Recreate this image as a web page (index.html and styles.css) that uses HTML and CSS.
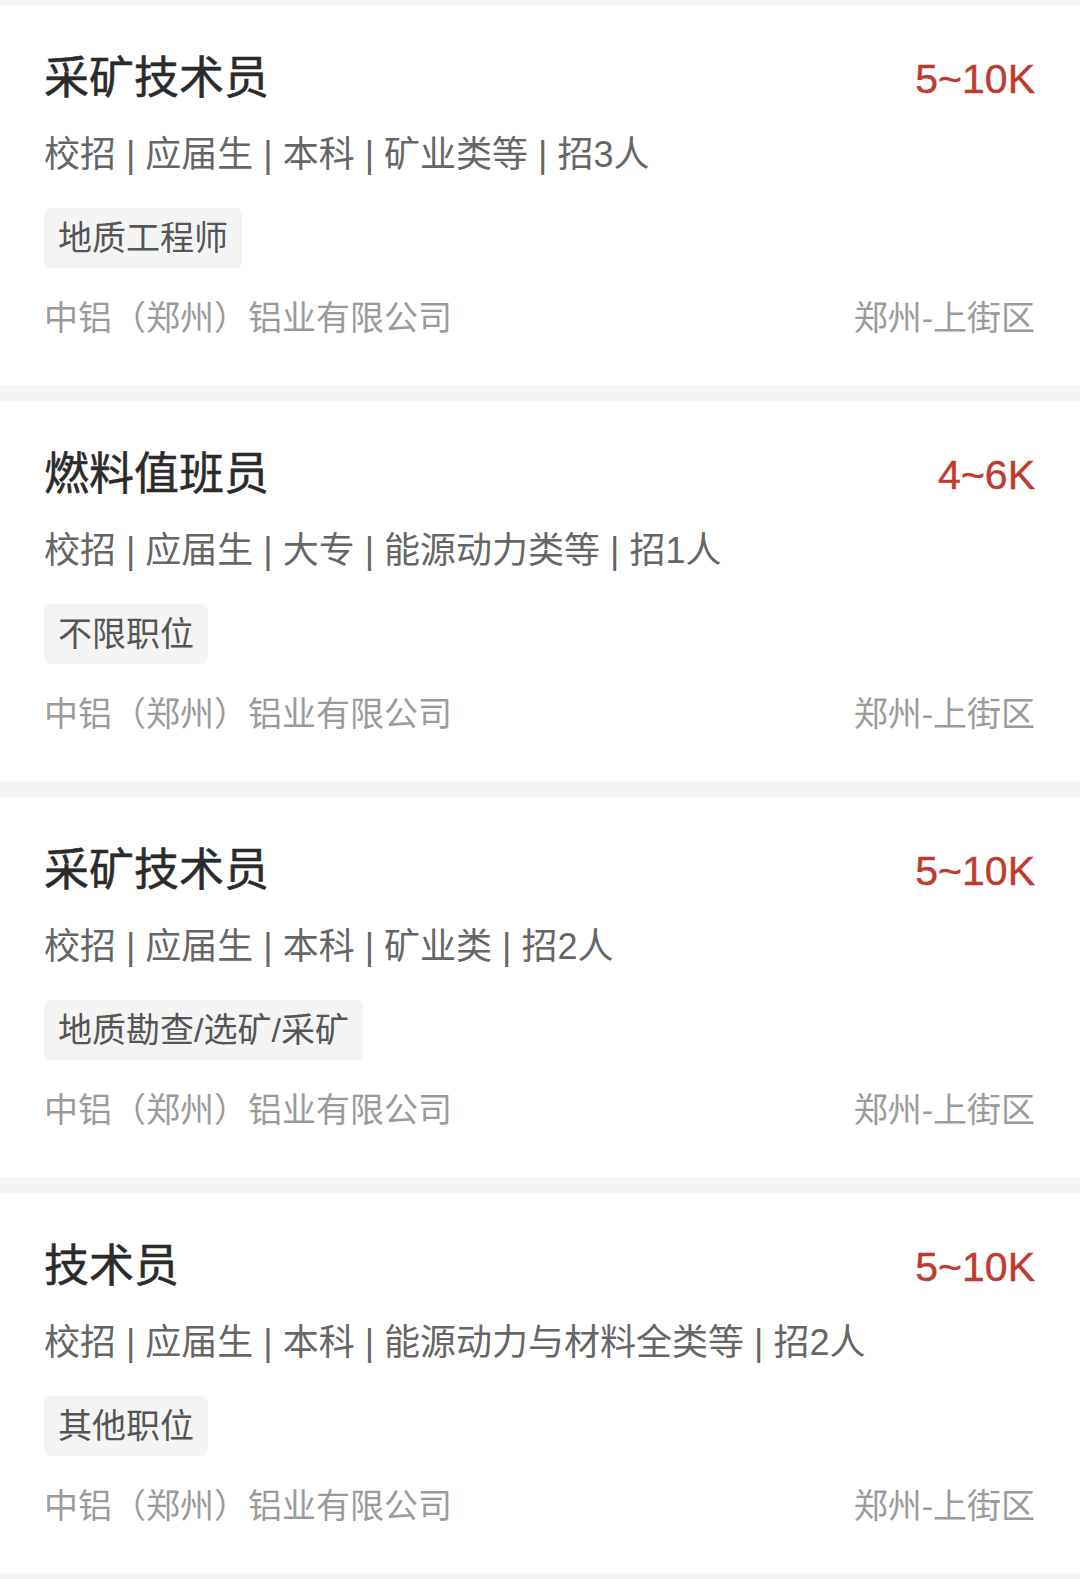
FILE: index.html
```html
<!DOCTYPE html>
<html lang="zh-CN">
<head>
    <meta charset="UTF-8">
    <meta name="viewport" content="width=device-width, initial-scale=1.0">
    <title>职位列表</title>
    <link rel="stylesheet" href="styles.css">
</head>
<body>
    <div class="job-list">
        <div class="job-card">
            <div class="job-head">
                <h3 class="job-title">采矿技术员</h3>
                <span class="job-salary">5~10K</span>
            </div>
            <p class="job-meta">校招 | 应届生 | 本科 | 矿业类等 | 招3人</p>
            <span class="job-tag">地质工程师</span>
            <div class="job-foot">
                <span>中铝（郑州）铝业有限公司</span>
                <span>郑州-上街区</span>
            </div>
        </div>

        <div class="job-card">
            <div class="job-head">
                <h3 class="job-title">燃料值班员</h3>
                <span class="job-salary">4~6K</span>
            </div>
            <p class="job-meta">校招 | 应届生 | 大专 | 能源动力类等 | 招1人</p>
            <span class="job-tag">不限职位</span>
            <div class="job-foot">
                <span>中铝（郑州）铝业有限公司</span>
                <span>郑州-上街区</span>
            </div>
        </div>

        <div class="job-card">
            <div class="job-head">
                <h3 class="job-title">采矿技术员</h3>
                <span class="job-salary">5~10K</span>
            </div>
            <p class="job-meta">校招 | 应届生 | 本科 | 矿业类 | 招2人</p>
            <span class="job-tag">地质勘查/选矿/采矿</span>
            <div class="job-foot">
                <span>中铝（郑州）铝业有限公司</span>
                <span>郑州-上街区</span>
            </div>
        </div>

        <div class="job-card">
            <div class="job-head">
                <h3 class="job-title">技术员</h3>
                <span class="job-salary">5~10K</span>
            </div>
            <p class="job-meta">校招 | 应届生 | 本科 | 能源动力与材料全类等 | 招2人</p>
            <span class="job-tag">其他职位</span>
            <div class="job-foot">
                <span>中铝（郑州）铝业有限公司</span>
                <span>郑州-上街区</span>
            </div>
        </div>
    </div>
</body>
</html>
```

FILE: styles.css
```css
body {
    font-family: "Liberation Sans", "Noto Sans CJK SC", sans-serif;
    background: #f4f5f7;
    margin: 0;
    padding: 5px 0 6px;
}
.job-list {
    display: flex;
    flex-direction: column;
    gap: 16px;
}
.job-card {
    background: white;
    height: 380px;
    box-sizing: border-box;
    padding: 44px 45px 0 44px;
    display: flex;
    flex-direction: column;
    align-items: flex-start;
}
.job-head {
    display: flex;
    justify-content: space-between;
    align-items: center;
    width: 100%;
    height: 60px;
}
.job-title {
    margin: 0;
    font-size: 45px;
    font-weight: 400;
    color: #2b2b2b;
    -webkit-text-stroke: 0.5px #2b2b2b;
    line-height: 60px;
}
.job-salary {
    font-size: 41px;
    color: #bf3a2f;
    -webkit-text-stroke: 0.4px #bf3a2f;
    line-height: 60px;
}
.job-meta {
    margin: 22px 0 0;
    font-size: 36px;
    line-height: 48px;
    color: #666;
}
.job-tag {
    margin-top: 29px;
    padding: 0 14px;
    height: 60px;
    line-height: 60px;
    font-size: 34px;
    color: #555;
    background: #f4f4f4;
    border-radius: 6px;
}
.job-foot {
    margin-top: 28px;
    width: 100%;
    display: flex;
    justify-content: space-between;
    font-size: 34px;
    line-height: 44px;
    color: #9b9b9b;
}
```
